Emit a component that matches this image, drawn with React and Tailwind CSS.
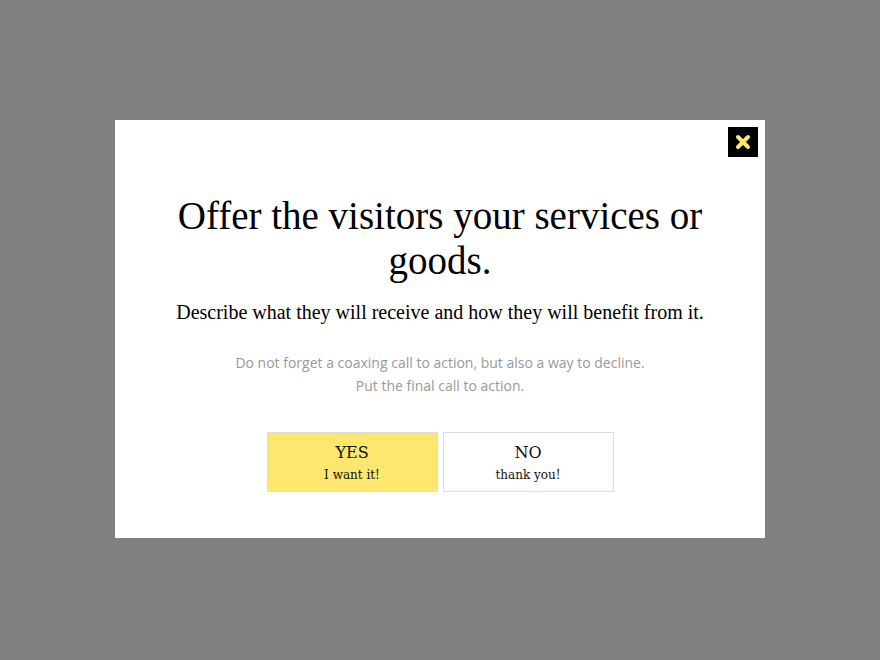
import { useState } from 'react';

function CloseIcon() {
  return (
    <svg width="16" height="16" viewBox="0 0 16 16">
      <path d="M3 3 L13 13 M13 3 L3 13" stroke="#fde76e" strokeWidth="4" strokeLinecap="round" />
    </svg>
  );
}

export default function App() {
  const [open, setOpen] = useState(true);

  return (
    <div className="w-[880px] h-[660px] bg-[#808080] flex justify-center pt-[120px]">
      {open && (
        <div className="relative w-[650px] h-[418px] bg-white flex flex-col items-center pt-[73px]">
          <button
            onClick={() => setOpen(false)}
            className="absolute top-[7px] right-[7px] w-[30px] h-[30px] bg-black flex items-center justify-center">
            <CloseIcon />
          </button>

          <h1 className="w-[580px] text-center text-[39px] leading-[45px] text-black font-['Liberation_Serif',serif]">
            Offer the visitors your services or goods.
          </h1>
          <p className="mt-[16px] text-center text-[20px] leading-[26px] text-black font-['Liberation_Serif',serif]">
            Describe what they will receive and how they will benefit from it.
          </p>
          <p className="mt-[26px] text-center text-[14px] leading-[23px] text-[#999] font-['Open_Sans',sans-serif]">
            Do not forget a coaxing call to action, but also a way to decline.<br />
            Put the final call to action.
          </p>

          <div className="mt-[35px] flex gap-[5px] font-['DejaVu_Serif',serif] text-[#111]">
            <button className="w-[171px] h-[60px] bg-[#fde76e] border border-[#ddd] flex flex-col items-center justify-center pt-[2px]">
              <span className="text-[16px] leading-[20px]">YES</span>
              <span className="text-[12px] leading-[18px] mt-[3px]">I want it!</span>
            </button>
            <button className="w-[171px] h-[60px] bg-white border border-[#ddd] flex flex-col items-center justify-center pt-[2px]">
              <span className="text-[16px] leading-[20px]">NO</span>
              <span className="text-[12px] leading-[18px] mt-[3px]">thank you!</span>
            </button>
          </div>
        </div>
      )}
    </div>
  );
}
